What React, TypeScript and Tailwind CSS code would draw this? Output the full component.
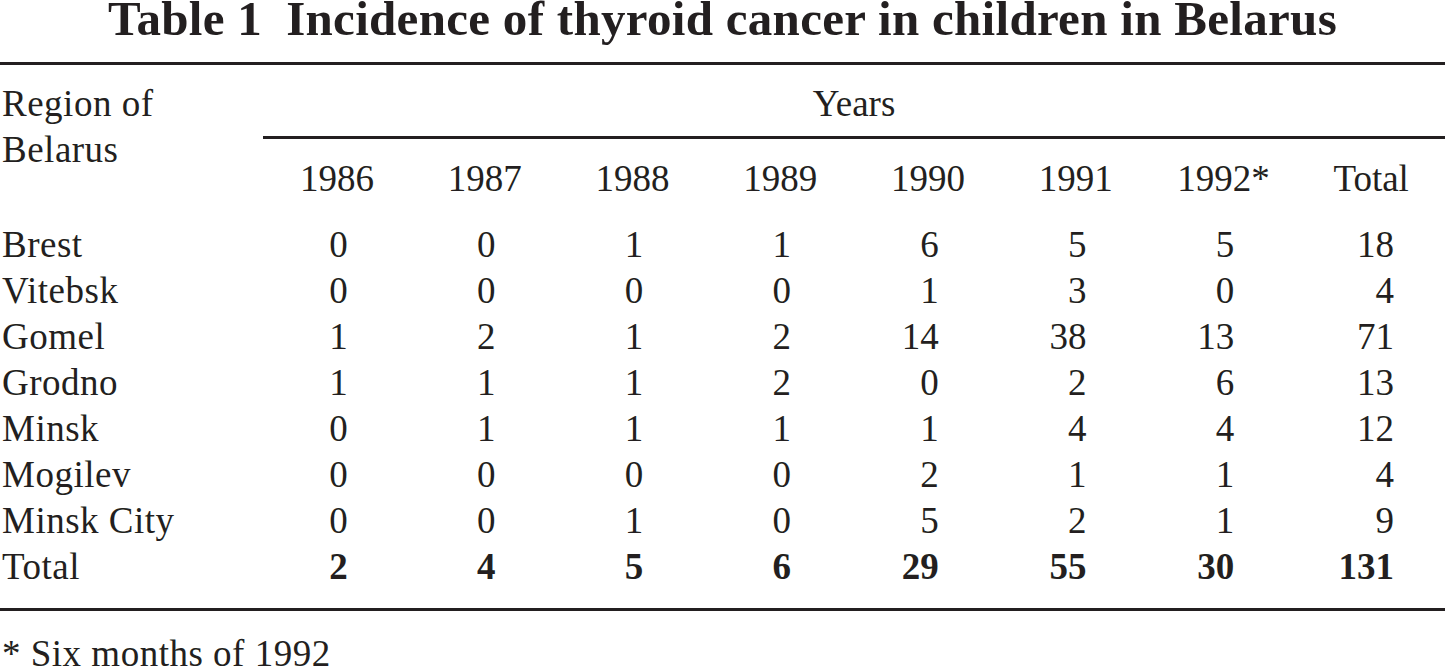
const years = ["1986", "1987", "1988", "1989", "1990", "1991", "1992*", "Total"];

const rows: { region: string; values: number[] }[] = [
  { region: "Brest", values: [0, 0, 1, 1, 6, 5, 5, 18] },
  { region: "Vitebsk", values: [0, 0, 0, 0, 1, 3, 0, 4] },
  { region: "Gomel", values: [1, 2, 1, 2, 14, 38, 13, 71] },
  { region: "Grodno", values: [1, 1, 1, 2, 0, 2, 6, 13] },
  { region: "Minsk", values: [0, 1, 1, 1, 1, 4, 4, 12] },
  { region: "Mogilev", values: [0, 0, 0, 0, 2, 1, 1, 4] },
  { region: "Minsk City", values: [0, 0, 1, 0, 5, 2, 1, 9] },
];

const totals = [2, 4, 5, 6, 29, 55, 30, 131];

function Rule() {
  return <div className="h-[3px] w-full bg-[#231f20]" />;
}

function NumCell({ value, last, bold }: { value: number; last: boolean; bold?: boolean }) {
  return (
    <div className={`text-right ${last ? "pr-[51px]" : "pr-[63px]"} ${bold ? "font-bold" : ""}`}>
      {value}
    </div>
  );
}

export default function App() {
  return (
    <div className="w-[1445px] h-[670px] overflow-hidden bg-white text-[#231f20] font-['Liberation_Serif',serif]">
      <h1 className="text-center text-[49px] font-bold leading-[37px] tracking-[0.3px]">
        Table 1<span className="inline-block w-[24px]" />Incidence of thyroid cancer in children in Belarus
      </h1>

      <div className="mt-[25px]">
        <Rule />
      </div>

      <div className="grid grid-cols-[263px_repeat(8,1fr)] pt-[16px] text-[37px] leading-[46px]">
        <div className="row-span-3 pl-[2px] tracking-[0.5px]">
          Region of
          <br />
          Belarus
        </div>
        <div className="col-span-8 text-center">Years</div>
        <div className="col-span-8 mt-[9px]">
          <Rule />
        </div>
        {years.map((y) => (
          <div key={y} className="mt-[17px] text-center">
            {y}
          </div>
        ))}
      </div>

      <div className="mt-[20px] grid grid-cols-[263px_repeat(8,1fr)] text-[37px] leading-[46px]">
        {rows.map((r) => (
          <div key={r.region} className="contents">
            <div className="pl-[2px] tracking-[0.5px]">{r.region}</div>
            {r.values.map((v, i) => (
              <NumCell key={i} value={v} last={i === 7} />
            ))}
          </div>
        ))}
        <div className="pl-[2px] tracking-[0.5px]">Total</div>
        {totals.map((v, i) => (
          <NumCell key={i} value={v} last={i === 7} bold />
        ))}
      </div>

      <div className="mt-[18px]">
        <Rule />
      </div>

      <p className="mt-[20px] pl-[2px] text-[37px] leading-[46px] tracking-[0.5px]">* Six months of 1992</p>
    </div>
  );
}
